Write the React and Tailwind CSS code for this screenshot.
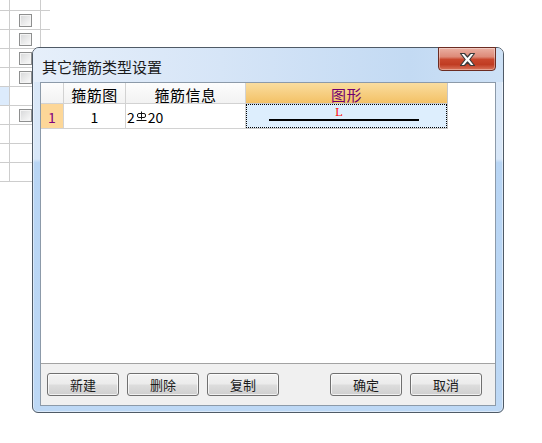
import React from "react";

function Checkbox() {
  return (
    <div className="w-[13px] h-[13px] border border-[#8e8f8f] bg-[linear-gradient(135deg,#d6d7d8,#fbfbfb)] shadow-[inset_0_0_0_1px_#f4f4f4]" />
  );
}

function BgTable() {
  const rows = [
    { h: "h-[11px]", cb: false, blue: false },
    { h: "h-[19px]", cb: true },
    { h: "h-[19px]", cb: true },
    { h: "h-[19px]", cb: true },
    { h: "h-[19px]", cb: true },
    { h: "h-[19px]", cb: false, blue: true },
    { h: "h-[19px]", cb: true },
    { h: "h-[19px]", cb: false },
    { h: "h-[19px]", cb: false },
    { h: "h-[19px]", cb: false },
  ];
  return (
    <div className="flex flex-col w-[50px]">
      {rows.map((r, i) => (
        <div key={i} className={`flex ${r.h} border-b border-[#cdcdcd]`}>
          <div className={`w-[10px] h-full border-r border-[#cdcdcd] ${r.blue ? "bg-[#dcebfc]" : ""}`} />
          <div className="w-[31px] h-full border-r border-[#cdcdcd] pl-[9px] pt-[3px]">
            {r.cb && <Checkbox />}
          </div>
          <div className="w-[9px] h-full" />
        </div>
      ))}
    </div>
  );
}

function RebarSymbol() {
  return (
    <svg width="11" height="11" viewBox="0 0 11 11" className="inline-block mx-[1px] mb-[1px]">
      <rect x="1.5" y="2.5" width="8" height="4" rx="1.5" fill="none" stroke="#111" strokeWidth="1" />
      <line x1="5.5" y1="0.5" x2="5.5" y2="8.5" stroke="#111" strokeWidth="1" />
      <line x1="0.5" y1="9.5" x2="10.5" y2="9.5" stroke="#111" strokeWidth="1" />
    </svg>
  );
}

function CloseButton() {
  return (
    <div className="absolute top-[-1px] right-[7px] w-[58px] h-[24px] border border-[#6b2c22] rounded-b-[4px] bg-[linear-gradient(180deg,#eab0a3_0%,#dd8a78_40%,#c9472d_52%,#c03c22_75%,#d9755c_100%)] shadow-[inset_0_0_0_1px_rgba(255,255,255,0.35)] flex items-center justify-center">
      <svg width="17" height="15" viewBox="0 0 17 15">
        <polygon
          points="1.5,1.5 5.5,1.5 8.5,5 11.5,1.5 15.5,1.5 10.8,7.5 15.5,13.5 11.5,13.5 8.5,10 5.5,13.5 1.5,13.5 6.2,7.5"
          fill="#ffffff"
          stroke="#3a3a3a"
          strokeWidth="1.2"
          strokeLinejoin="round"
        />
      </svg>
    </div>
  );
}

function Button({ children }) {
  return (
    <div className="w-[72px] h-[23px] border border-[#707070] rounded-[3px] bg-[linear-gradient(180deg,#f3f3f3_0%,#ebebeb_48%,#dddddd_52%,#cfcfcf_100%)] shadow-[inset_0_0_0_1px_rgba(255,255,255,0.7)] flex items-center justify-center text-[13px] leading-[13px] text-[#1b1b1b]">
      {children}
    </div>
  );
}

function Grid() {
  const hdr = "h-full border-r border-b border-[#d2d2d2] bg-[linear-gradient(180deg,#fdfdfd,#f2f2f2)] flex items-center justify-center pt-[2px] text-[15px] leading-[15px] tracking-[0.5px] text-black";
  return (
    <div className="h-[281px] border-b border-[#a3a3a3] bg-white">
      <div className="flex h-[21px]">
        <div className={`w-[23px] ${hdr}`} />
        <div className={`w-[62px] ${hdr}`}>箍筋图</div>
        <div className={`w-[120px] ${hdr}`}>箍筋信息</div>
        <div className="w-[202px] h-full border-r border-b border-[#c8c8c8] bg-[linear-gradient(180deg,#fadd9f,#f3c166)] flex items-center justify-center pt-[2px] text-[15px] leading-[15px] tracking-[0.5px] text-[#700070]">
          图形
        </div>
      </div>
      <div className="flex h-[25px]">
        <div className="w-[23px] h-full border-r border-b border-[#d2d2d2] bg-[#fdd798] flex items-center justify-center pt-[2px] text-[14px] leading-[14px] text-[#800080]">
          1
        </div>
        <div className="w-[62px] h-full border-r border-b border-[#d2d2d2] flex items-center justify-center pt-[2px] text-[14px] leading-[14px] text-black">
          1
        </div>
        <div className="w-[120px] h-full border-r border-b border-[#d2d2d2] flex items-center pl-[1px] pt-[2px] text-[14px] leading-[14px] text-black">
          <span>2</span>
          <RebarSymbol />
          <span>20</span>
        </div>
        <div className="w-[202px] h-full border-r border-b border-[#c8c8c8]">
          <div className="h-full border border-dotted border-black bg-[#ddeefd] flex flex-col items-start pt-[2px]">
            <span className="ml-[88px] h-[12px] text-[11px] leading-[12px] text-[#ff0000] font-['DejaVu_Serif',serif]">
              L
            </span>
            <div className="ml-[22px] w-[150px] h-[2px] bg-black" />
          </div>
        </div>
      </div>
    </div>
  );
}

function Dialog() {
  return (
    <div className="absolute left-[32px] top-[47px] w-[472px] h-[366px] border border-[#4f5a66] rounded-t-[7px] rounded-b-[6px] flex flex-col bg-[linear-gradient(180deg,#dbe8f7_0%,#d8e7f8_30.5%,#b8d5f4_31.5%,#bdd8f5_100%)] shadow-[inset_0_0_0_1px_rgba(255,255,255,0.45)]">
      <div className="relative h-[34px] rounded-t-[6px] bg-[linear-gradient(90deg,#e6effa_0%,#d6e5f7_40%,#c3daf3_80%,#cde1f6_100%)] flex items-center pl-[9px] pt-[2px]">
        <span className="text-[15px] leading-[15px] text-[#1a1a1a]">其它箍筋类型设置</span>
        <CloseButton />
      </div>
      <div className="mx-[7px] h-[324px] border border-[#8c9aa9] flex flex-col bg-white">
        <Grid />
        <div className="flex-1 bg-[#f0f0f0] flex items-start justify-between pt-[9px] pl-[6px] pr-[13px]">
          <div className="flex gap-[8px]">
            <Button>新建</Button>
            <Button>删除</Button>
            <Button>复制</Button>
          </div>
          <div className="flex gap-[8px]">
            <Button>确定</Button>
            <Button>取消</Button>
          </div>
        </div>
      </div>
    </div>
  );
}

export default function App() {
  return (
    <div className="relative w-[542px] h-[443px] bg-white overflow-hidden font-['Noto_Sans_CJK_SC',sans-serif]">
      <BgTable />
      <Dialog />
    </div>
  );
}
